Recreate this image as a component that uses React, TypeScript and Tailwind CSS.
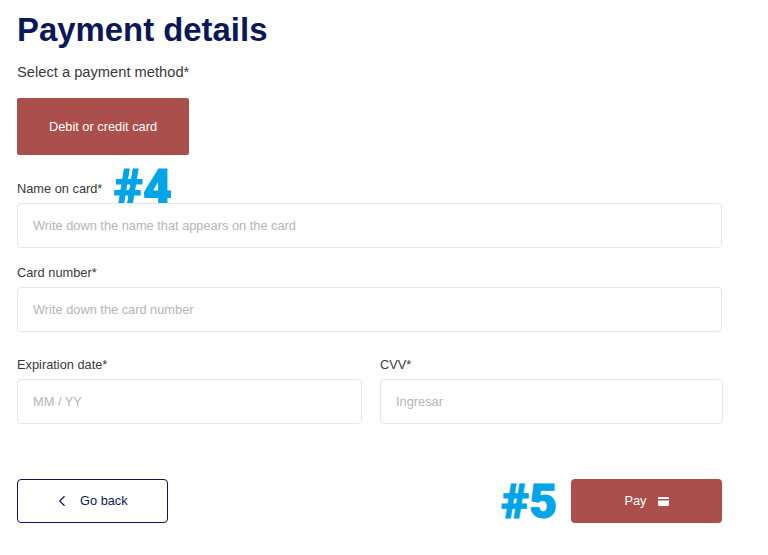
import { ChevronLeft } from "lucide-react";

const sans = "font-['Liberation_Sans',Arial,sans-serif]";

function Field({ label, placeholder }: { label: string; placeholder: string }) {
  return (
    <div className="flex flex-col">
      <label className="h-[18px] text-[12.8px] leading-[18px] text-[#3a3a3a]">{label}</label>
      <input
        placeholder={placeholder}
        className="relative z-10 mt-[5px] h-[45px] w-full rounded-[4px] border border-[#e6e6e6] bg-white px-[15px] text-[12.8px] outline-none placeholder:text-[#b5b5b5]"
      />
    </div>
  );
}

export default function App() {
  return (
    <div className={`${sans} relative h-[555px] w-[768px] overflow-hidden bg-white pl-[17px]`}>
      <div className="flex w-[705px] flex-col">
        <h1 className="mt-[11px] h-[38px] text-[32.9px] leading-[38px] font-bold text-[#0a1857]">Payment details</h1>
        <p className="mt-[13px] h-[20px] text-[14.7px] leading-[20px] text-[#3a3a3a]">Select a payment method*</p>
        <button className="mt-[16px] h-[57px] w-[172px] rounded-[2px] bg-[#ab4f4c] pt-[1px] text-[12.8px] text-white">
          Debit or credit card
        </button>
        <div className="relative mt-[25px]">
          <Field label="Name on card*" placeholder="Write down the name that appears on the card" />
          <span className="absolute top-[-20px] left-[97px] font-['Roboto',sans-serif] text-[50px] leading-[56px] font-black text-[#00a4e8] [-webkit-text-stroke:1px_#00a4e8]">
            #4
          </span>
        </div>
        <div className="mt-[16px]">
          <Field label="Card number*" placeholder="Write down the card number" />
        </div>
        <div className="mt-[24px] grid grid-cols-[345px_343px] gap-x-[18px]">
          <Field label="Expiration date*" placeholder="MM / YY" />
          <Field label="CVV*" placeholder="Ingresar" />
        </div>
        <div className="mt-[55px] flex items-center justify-between">
          <button className="flex h-[44px] w-[151px] items-center gap-[9px] rounded-[4px] border border-[#0a1857] bg-white pl-[35px] text-[12.8px] text-[#0a1857]">
            <ChevronLeft size={18} strokeWidth={1.5} />
            Go back
          </button>
          <div className="flex items-center gap-[14px]">
            <span className="pt-[2px] font-['Roboto',sans-serif] text-[48px] leading-[42px] font-black text-[#00a4e8] [-webkit-text-stroke:1px_#00a4e8]">#5</span>
            <button className="flex h-[44px] w-[151px] items-center justify-center gap-[11px] rounded-[4px] bg-[#ab4f4c] text-[12.8px] text-white">
              Pay
              <svg width="11" height="9" viewBox="0 0 11 9" fill="none">
                <path d="M1.2 0h8.6A1.2 1.2 0 0 1 11 1.2V2H0v-.8A1.2 1.2 0 0 1 1.2 0Z" fill="#fff" />
                <path d="M0 3.4h11v4.4A1.2 1.2 0 0 1 9.8 9H1.2A1.2 1.2 0 0 1 0 7.8V3.4Z" fill="#fff" />
              </svg>
            </button>
          </div>
        </div>
      </div>
    </div>
  );
}
